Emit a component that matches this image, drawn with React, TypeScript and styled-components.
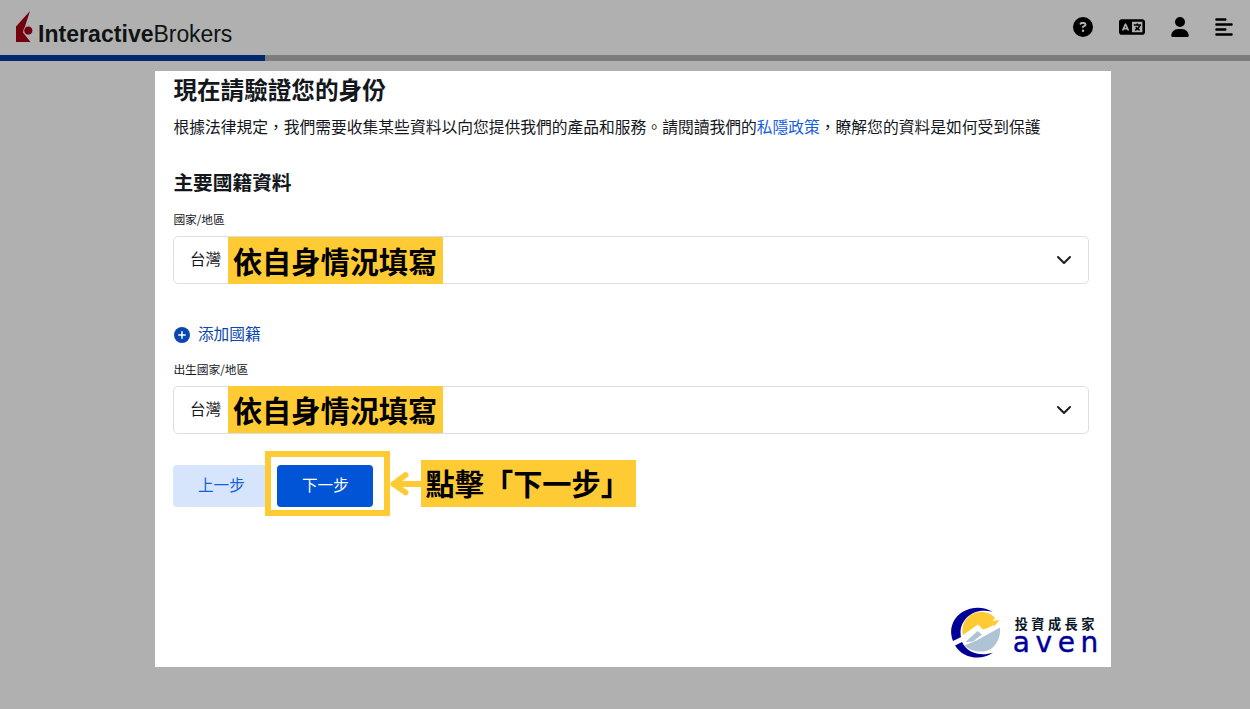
import React from 'react';
import styled, { createGlobalStyle } from 'styled-components';
import { FaCircleQuestion, FaLanguage, FaUser, FaAlignLeft } from 'react-icons/fa6';

const Global = createGlobalStyle`
  * { box-sizing: border-box; }
  body {
    margin: 0;
    background: #b0b0b0;
    color: #14171c;
    font-family: "Noto Sans CJK TC", sans-serif;
    overflow: hidden;
  }
`;

const Page = styled.div`
  height: 709px;
  display: flex;
  flex-direction: column;
`;

const Header = styled.header`
  height: 55px;
  display: flex;
  justify-content: space-between;
  padding: 0 16px 0 15px;
`;

const Brand = styled.div`
  display: flex;
  align-items: flex-start;
  padding-top: 11px;
`;

const BrandName = styled.span`
  margin: 9px 0 0 5px;
  font: 23px/28px "Liberation Sans", sans-serif;
  letter-spacing: -0.1px;
  color: #101314;
  white-space: nowrap;
  b { letter-spacing: 0.05px; }
`;

const Tools = styled.nav`
  display: flex;
  align-items: center;
  height: 54px;
  color: #000;
  svg { display: block; }
`;

const Tool = styled.span<{ $gap?: number }>`
  margin-left: ${(p) => p.$gap ?? 0}px;
`;

const Progress = styled.div`
  flex: none;
  height: 6px;
  background: #7d7d7d;
`;

const ProgressFill = styled.div`
  width: 265px;
  height: 100%;
  background: #00286c;
`;

const Panel = styled.main`
  display: flex;
  flex-direction: column;
  width: 956px;
  height: 596px;
  margin: 10px 0 0 155.4px;
  padding: 0 23px 9px 18px;
  background: #fff;
`;

const Title = styled.h1`
  margin: 0;
  padding-top: 1px;
  font-size: 23.6px;
  line-height: 34px;
  font-weight: 700;
`;

const Intro = styled.p`
  margin: 9px 0 0;
  font-size: 15.77px;
  line-height: 24px;
  white-space: nowrap;
`;

const Link = styled.a`
  color: #1560dc;
`;

const Section = styled.h2`
  margin: 28px 0 0;
  font-size: 19.7px;
  line-height: 30px;
  font-weight: 700;
`;

const Label = styled.label<{ $top: number }>`
  margin-top: ${(p) => p.$top}px;
  font-size: 11.8px;
  line-height: 18px;
  letter-spacing: -0.1px;
`;

const Select = styled.div`
  position: relative;
  display: flex;
  align-items: center;
  justify-content: space-between;
  flex: none;
  height: 48px;
  width: 916px;
  margin: 8px 0 0 -0.5px;
  padding: 0 16px 4px 16px;
  border: 1px solid #dcdee0;
  border-radius: 5px;
  font-size: 15.6px;
  svg { margin-top: 4px; }
`;

const Note = styled.div`
  display: flex;
  align-items: center;
  width: 215px;
  height: 47px;
  padding: 0 0 0 5px;
  background: #ffcb34;
  color: #000;
  font-size: 29.2px;
  line-height: 47px;
  font-weight: 700;
  white-space: nowrap;
`;

const Bracket = styled.span`
  font-family: "Noto Sans CJK JP", sans-serif;
`;

const FieldNote = styled(Note)<{ $top: number }>`
  position: absolute;
  left: 54px;
  top: ${(p) => p.$top}px;
  padding-bottom: 1px;
`;

const AddRow = styled.div`
  display: flex;
  align-items: center;
  gap: 8px;
  height: 24px;
  margin: 38px 0 0 0.5px;
  color: #0a47ae;
  font-size: 15.7px;
  span { line-height: 24px; }
  svg { margin-top: 2px; }
`;

const Actions = styled.div`
  position: relative;
  display: flex;
  gap: 8px;
  margin-top: 31px;
`;

const Button = styled.button<{ $primary?: boolean }>`
  width: 96px;
  height: 42px;
  padding: 0 0 4px;
  border: 0;
  border-radius: 4px;
  background: ${(p) => (p.$primary ? '#0054d5' : '#d7e5fc')};
  color: ${(p) => (p.$primary ? '#fff' : '#1261d8')};
  font: 15.6px "Noto Sans CJK TC", sans-serif;
`;

const Callout = styled.div`
  position: absolute;
  left: 91.2px;
  top: -14px;
  display: flex;
  align-items: center;
  ${Note} { padding-bottom: 3px; }
`;

const Frame = styled.div`
  width: 125px;
  height: 65px;
  border: 6px solid #ffcb34;
`;

const Footer = styled.footer`
  display: flex;
  justify-content: flex-end;
  margin-top: auto;
  margin-right: -11.4px;
`;

const Author = styled.div`
  display: flex;
  flex-direction: column;
  width: 87px;
  margin: 8px 0 0 12px;
`;

const AuthorName = styled.span`
  padding-left: 2px;
  font-size: 13.2px;
  line-height: 18px;
  font-weight: 700;
  letter-spacing: 3.4px;
  white-space: nowrap;
  color: #0b1626;
`;

const AuthorMark = styled.span`
  font: 28px/20px "DejaVu Sans", sans-serif;
  letter-spacing: 5.6px;
  white-space: nowrap;
  color: #000099;
  -webkit-text-stroke: 0.4px #000099;
`;

function Flame() {
  return (
    <svg width="18" height="32" viewBox="0 0 18 32">
      <path d="M15 0 1 15.500V31h14.500L8 21.500Z" fill="#74000f" />
      <circle cx="13.3" cy="19.6" r="4.500" fill="#74000f" stroke="#b0b0b0" strokeWidth="0.8" />
    </svg>
  );
}

function Chevron() {
  return (
    <svg width="16" height="10" viewBox="0 0 16 10" fill="none">
      <path d="m2 2 6 6 6-6" stroke="#1b1e22" strokeWidth="2" strokeLinecap="round" strokeLinejoin="round" />
    </svg>
  );
}

function PlusBadge() {
  return (
    <svg width="16" height="16" viewBox="0 0 16 16">
      <circle cx="8" cy="8" r="8" fill="#0a47ae" />
      <path d="M8 4.8v6.4M4.8 8h6.4" stroke="#fff" strokeWidth="1.5" strokeLinecap="round" />
    </svg>
  );
}

function Arrow() {
  return (
    <svg width="31" height="26" viewBox="0 0 31 26" fill="none">
      <path d="M15.5 4 3.5 13l12 8.5M3.5 13H31" stroke="#ffcb34" strokeWidth="5.8" strokeLinecap="round" strokeLinejoin="round" />
    </svg>
  );
}

function Mountain() {
  return (
    <svg width="50" height="51" viewBox="0 0 50 51">
      <path d="M42 5C29-3 12 .5 4 12-.5 19-1 26 2 34l8-4C7 16 19 2 36 4c2 0 4 .3 6 1Z" fill="#000096" />
      <path d="M4 38.500 11 35c5 11 19 15 31 10.500C31 54 12 52 4 38.500Z" fill="#000096" />
      <path d="M12 28C9 16 18 5 30 5c6 0 11 2 14 6l-2.500 3 7-1-5 6L32 22.500l-5-5Z" fill="#ffcb34" />
      <path d="M14.500 35 26.500 24l4.500 3.500-9 7Z" fill="#aec3d4" />
      <path d="m13.500 38.500 12-5L49 20.500C50 34 42 44.500 31 44.500c-8 0-13-2-17.500-6Z" fill="#aec3d4" />
      <path d="m4 36.500 23-16 5 4.500 11-6" stroke="#fff" strokeWidth="2.500" fill="none" />
    </svg>
  );
}

export default function App() {
  return (
    <Page>
      <Global />
      <Header>
        <Brand>
          <Flame />
          <BrandName><b>Interactive</b>Brokers</BrandName>
        </Brand>
        <Tools>
          <Tool><FaCircleQuestion size={20} /></Tool>
          <Tool $gap={26}><FaLanguage size={26} /></Tool>
          <Tool $gap={25}><FaUser size={20} /></Tool>
          <Tool $gap={24}><FaAlignLeft size={20} /></Tool>
        </Tools>
      </Header>
      <Progress><ProgressFill /></Progress>
      <Panel>
        <Title>現在請驗證您的身份</Title>
        <Intro>
          根據法律規定，我們需要收集某些資料以向您提供我們的產品和服務。請閱讀我們的<Link>私隱政策</Link>，瞭解您的資料是如何受到保護
        </Intro>
        <Section>主要國籍資料</Section>
        <Label $top={13}>國家/地區</Label>
        <Select>
          台灣
          <FieldNote $top={0}>依自身情況填寫</FieldNote>
          <Chevron />
        </Select>
        <AddRow>
          <PlusBadge />
          <span>添加國籍</span>
        </AddRow>
        <Label $top={14}>出生國家/地區</Label>
        <Select>
          台灣
          <FieldNote $top={-1}>依自身情況填寫</FieldNote>
          <Chevron />
        </Select>
        <Actions>
          <Button>上一步</Button>
          <Button $primary>下一步</Button>
          <Callout>
            <Frame />
            <Arrow />
            <Note>點擊<Bracket>「</Bracket>下一步<Bracket>」</Bracket></Note>
          </Callout>
        </Actions>
        <Footer>
          <Mountain />
          <Author>
            <AuthorName>投資成長家</AuthorName>
            <AuthorMark>aven</AuthorMark>
          </Author>
        </Footer>
      </Panel>
    </Page>
  );
}
